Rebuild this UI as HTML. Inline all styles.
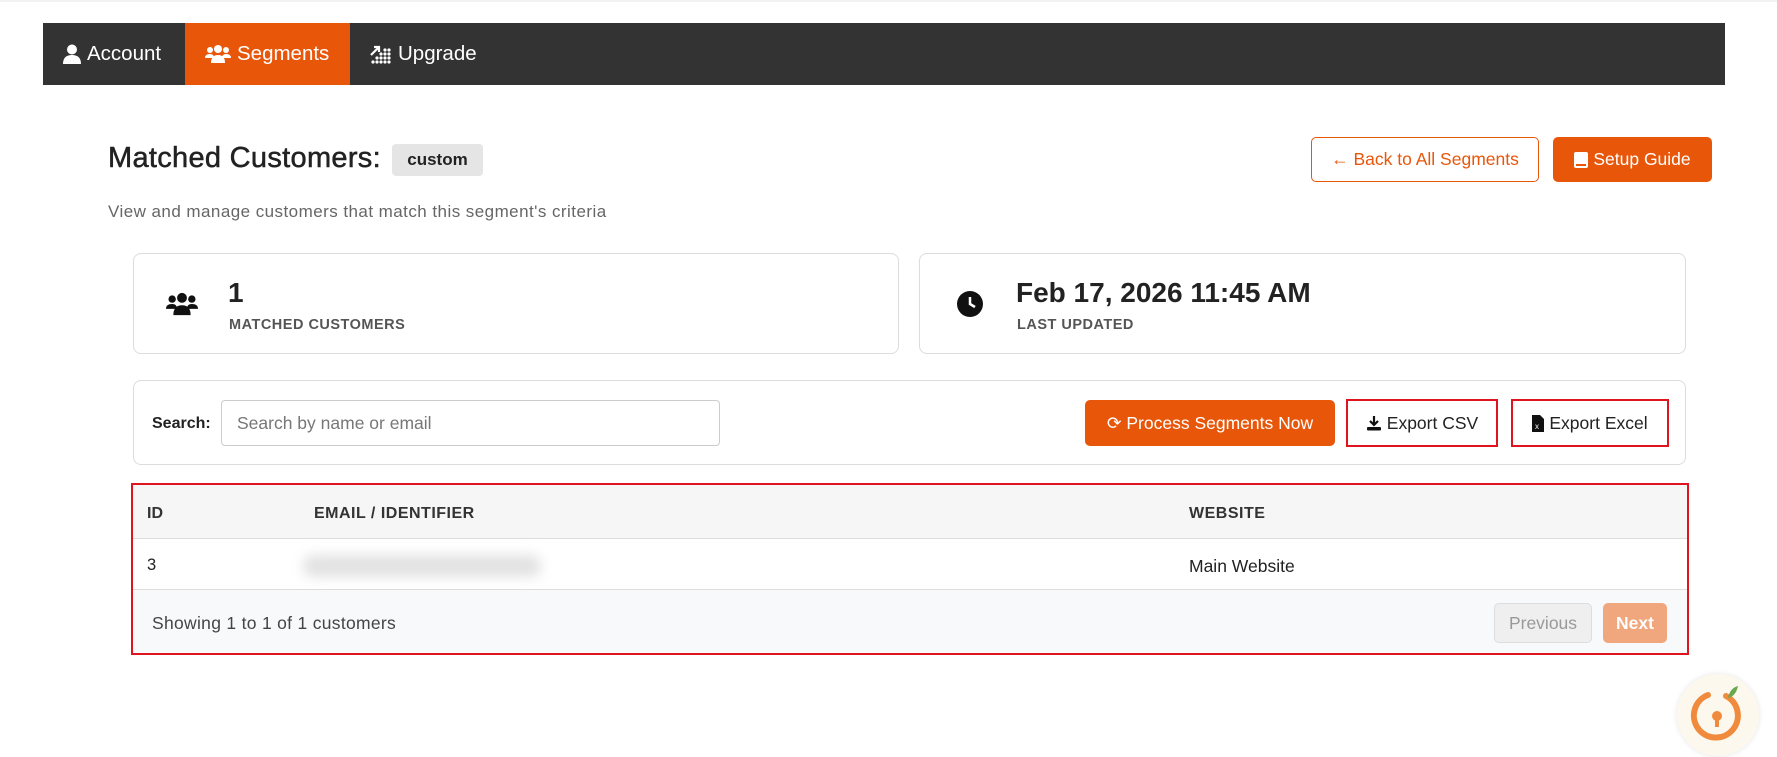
<!DOCTYPE html>
<html><head><meta charset="utf-8"><style>
*{box-sizing:border-box;margin:0;padding:0}
body{width:1777px;height:757px;background:#fff;font-family:"Liberation Sans",sans-serif;color:#222;position:relative;overflow:hidden}
.a{position:absolute}
.nav{left:43px;top:23px;width:1682px;height:62px;background:#333}
.tab{top:0;height:62px;color:#fff;font-size:20.5px;display:flex;align-items:center;gap:6px}
.card{border:1px solid #dcdcdc;border-radius:8px;background:#fff}
.btn{display:flex;align-items:center;justify-content:center;font-size:17.5px;border-radius:5px;gap:5px}
.red{border:2px solid #e0141e}
</style></head><body>
<div class="a" style="left:0;top:0;width:1777px;height:2px;background:#f3f3f3"></div>
<div class="a nav">
 <div class="a tab" style="left:0;width:142px;padding-left:20px">
  <svg width="18" height="20" viewBox="0 0 18 20"><circle cx="9" cy="5.5" r="5" fill="#fff"/><path d="M0 20 Q0 11 9 11 Q18 11 18 20Z" fill="#fff"/></svg>Account</div>
 <div class="a tab" style="left:142px;width:165px;background:#e8560a;padding-left:20px">
  <svg width="26" height="18" viewBox="0 0 26 18"><circle cx="5" cy="5" r="3" fill="#fff"/><circle cx="21" cy="5" r="3" fill="#fff"/><circle cx="13" cy="4" r="4" fill="#fff"/><path d="M0 13Q0 9 5 9Q9 9 9 13ZM17 13Q17 9 21 9Q26 9 26 13ZM6 18Q6 10 13 10Q20 10 20 18Z" fill="#fff"/></svg>Segments</div>
 <div class="a tab" style="left:307px;width:140px;padding-left:20px">
  <svg width="22" height="20" viewBox="0 0 22 20" fill="#fff"><path d="M1 11L9 3M4 3h5v5" stroke="#fff" stroke-width="2.2" fill="none"/><circle cx="11" cy="10" r="1.6"/><circle cx="15" cy="10" r="1.6"/><circle cx="19" cy="10" r="1.6"/><circle cx="7" cy="14" r="1.6"/><circle cx="11" cy="14" r="1.6"/><circle cx="15" cy="14" r="1.6"/><circle cx="19" cy="14" r="1.6"/><circle cx="3" cy="18" r="1.6"/><circle cx="7" cy="18" r="1.6"/><circle cx="11" cy="18" r="1.6"/><circle cx="15" cy="18" r="1.6"/><circle cx="19" cy="18" r="1.6"/><circle cx="15" cy="6" r="1.6"/><circle cx="19" cy="6" r="1.6"/></svg>Upgrade</div>
</div>
<div class="a" style="left:108px;top:142px;font-size:29px;color:#222;-webkit-text-stroke:0.5px #222;letter-spacing:.3px">Matched Customers:</div>
<div class="a" style="left:392px;top:144px;width:91px;height:32px;background:#e5e5e5;border-radius:4px;font-size:17px;font-weight:bold;display:flex;align-items:center;justify-content:center">custom</div>
<div class="a" style="left:108px;top:202px;font-size:17px;color:#666;letter-spacing:.45px">View and manage customers that match this segment's criteria</div>
<div class="a btn" style="left:1311px;top:137px;width:228px;height:45px;border:1px solid #e8560a;color:#e8560a">&#8592; Back to All Segments</div>
<div class="a btn" style="left:1553px;top:137px;width:159px;height:45px;background:#e8560a;color:#fff"><svg width="14" height="16" viewBox="0 0 14 16"><rect x="0" y="0" width="14" height="16" rx="2" fill="#fff"/><rect x="2" y="12" width="10" height="2" fill="#e8560a"/></svg>Setup Guide</div>

<div class="a card" style="left:133px;top:253px;width:766px;height:101px"></div>
<svg class="a" style="left:166px;top:292px" width="32" height="24" viewBox="0 0 26 18"><circle cx="5" cy="5" r="3" fill="#111"/><circle cx="21" cy="5" r="3" fill="#111"/><circle cx="13" cy="4" r="4" fill="#111"/><path d="M0 13Q0 9 5 9Q9 9 9 13ZM17 13Q17 9 21 9Q26 9 26 13ZM6 18Q6 10 13 10Q20 10 20 18Z" fill="#111"/></svg>
<div class="a" style="left:228px;top:277px;font-size:28px;font-weight:bold">1</div>
<div class="a" style="left:229px;top:317px;font-size:14.5px;color:#555;font-weight:bold;letter-spacing:.5px">MATCHED CUSTOMERS</div>
<div class="a card" style="left:919px;top:253px;width:767px;height:101px"></div>
<svg class="a" style="left:957px;top:291px" width="26" height="26" viewBox="0 0 26 26"><circle cx="13" cy="13" r="13" fill="#111"/><path d="M13 6v7l5 3" stroke="#fff" stroke-width="2.5" fill="none"/></svg>
<div class="a" style="left:1016px;top:277px;font-size:28px;font-weight:bold">Feb 17, 2026 11:45 AM</div>
<div class="a" style="left:1017px;top:317px;font-size:14.5px;color:#555;font-weight:bold;letter-spacing:.5px">LAST UPDATED</div>

<div class="a card" style="left:133px;top:380px;width:1553px;height:85px"></div>
<div class="a" style="left:152px;top:415px;font-size:16px;font-weight:bold">Search:</div>
<div class="a" style="left:221px;top:400px;width:499px;height:46px;border:1px solid #ccc;border-radius:4px;font-size:17.5px;color:#777;padding:12px 15px">Search by name or email</div>
<div class="a btn" style="left:1085px;top:400px;width:250px;height:46px;background:#e8560a;color:#fff">&#10227; Process Segments Now</div>
<div class="a btn red" style="left:1346px;top:399px;width:152px;height:48px;border-radius:0;color:#222"><svg width="16" height="16" viewBox="0 0 16 16"><path d="M8 1v9M4 6l4 4 4-4" stroke="#111" stroke-width="2.2" fill="none"/><rect x="1" y="12" width="14" height="3.5" rx="1" fill="#111"/></svg>Export CSV</div>
<div class="a btn red" style="left:1511px;top:399px;width:158px;height:48px;border-radius:0;color:#222"><svg width="12" height="17" viewBox="0 0 12 17"><path d="M0 0h8l4 4v13H0z" fill="#111"/><text x="3" y="14" font-size="8" fill="#fff" font-family="Liberation Sans">x</text></svg>Export Excel</div>

<div class="a red" style="left:131px;top:483px;width:1558px;height:172px;background:#f8f9fa">
 <div class="a" style="left:0;top:0;width:1554px;height:54px;background:#f6f6f6;border-bottom:1px solid #ddd"></div>
 <div class="a" style="left:0;top:54px;width:1554px;height:51px;background:#fff;border-bottom:1px solid #ddd"></div>
 <div class="a" style="left:14px;top:20px;font-size:16px;font-weight:bold;color:#333">ID</div>
 <div class="a" style="left:181px;top:20px;font-size:16px;font-weight:bold;color:#333;letter-spacing:.5px">EMAIL / IDENTIFIER</div>
 <div class="a" style="left:1056px;top:20px;font-size:16px;font-weight:bold;color:#333;letter-spacing:.5px">WEBSITE</div>
 <div class="a" style="left:14px;top:71px;font-size:16.5px">3</div>
 <div class="a" style="left:170px;top:70px;width:238px;height:22px;background:#e2e2e2;filter:blur(6px);border-radius:10px"></div>
 <div class="a" style="left:1056px;top:71px;font-size:17.5px">Main Website</div>
 <div class="a" style="left:19px;top:128px;font-size:17.5px;color:#444;letter-spacing:.3px">Showing 1 to 1 of 1 customers</div>
 <div class="a btn" style="left:1361px;top:118px;width:98px;height:40px;background:#efefef;border:1px solid #ddd;color:#999">Previous</div>
 <div class="a btn" style="left:1470px;top:118px;width:64px;height:40px;background:#f0a77d;color:#fff;font-weight:bold">Next</div>
</div>

<div class="a" style="left:1677px;top:674px;width:82px;height:82px;border-radius:50%;background:#fdf8ee;box-shadow:0 0 6px rgba(0,0,0,.1)"></div>
<svg class="a" style="left:1684px;top:682px" width="66" height="66" viewBox="0 0 66 66"><path d="M42 14A22 22 0 1 1 24 13" stroke="#f08a3c" stroke-width="6" fill="none" stroke-linecap="round"/><circle cx="33" cy="34" r="5" fill="#f08a3c"/><rect x="31" y="35" width="4" height="10" fill="#f08a3c"/><path d="M44 16Q46 6 54 4Q52 14 44 16Z" fill="#6aa84f"/></svg>
</body></html>
